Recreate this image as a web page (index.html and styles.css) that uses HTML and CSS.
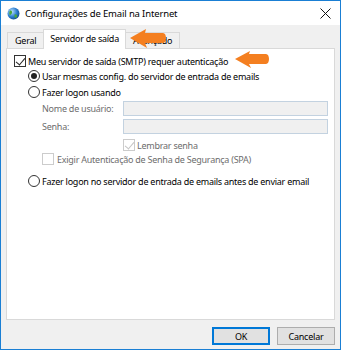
FILE: index.html
```html
<!DOCTYPE html>
<html lang="pt">
<head>
  <meta charset="UTF-8" />
  <title>Configurações de Email na Internet</title>
  <link rel="stylesheet" href="styles.css">
</head>
<body>
  <div class="window">
    <div class="titlebar">
      <svg class="app-icon" width="13" height="13" viewBox="0 0 13 13">
        <defs>
          <radialGradient id="g" cx="35%" cy="35%" r="70%">
            <stop offset="0" stop-color="#bfe3ff" />
            <stop offset="0.6" stop-color="#2d7fd0" />
            <stop offset="1" stop-color="#14508f" />
          </radialGradient>
        </defs>
        <circle cx="6.5" cy="6.5" r="6" fill="url(#g)" />
        <path d="M3 3.5 C4.5 3 5.5 4.5 5 6 C4.5 7.5 3.5 7 3 8.5 C2 7 2 5 3 3.5 Z" fill="#4aa83a" />
        <path d="M7.5 7.5 C9 7 10.5 8 10 10 C9 11 8 11 7.5 10 Z" fill="#4aa83a" />
      </svg>
      <span class="title">Configurações de Email na Internet</span>
      <svg class="close" width="11" height="11" viewBox="0 0 11 11">
        <path d="M0.5 0.5 L10.5 10.5 M10.5 0.5 L0.5 10.5" stroke="#111" stroke-width="1" />
      </svg>
    </div>

    <div class="body">
      <div class="tabs">
        <div class="tab">Geral</div>
        <div class="tab active">Servidor de saída</div>
        <div class="tab">Avançado</div>
      </div>

      <div class="panel">
        <div class="row row-main">
          <span class="check checked"></span>
          <span>Meu servidor de saída (SMTP) requer autenticação</span>
        </div>
        <div class="row row-radio1 indent">
          <span class="radio selected"></span>
          <span>Usar mesmas config. do servidor de entrada de emails</span>
        </div>
        <div class="row row-radio2 indent">
          <span class="radio"></span>
          <span>Fazer logon usando</span>
        </div>
        <div class="field field-user">
          <span class="field-label">Nome de usuário:</span>
          <span class="input"></span>
        </div>
        <div class="field field-pass">
          <span class="field-label">Senha:</span>
          <span class="input"></span>
        </div>
        <div class="row row-remember">
          <span class="check checked disabled"></span>
          <span class="muted">Lembrar senha</span>
        </div>
        <div class="row row-spa">
          <span class="check disabled"></span>
          <span class="muted">Exigir Autenticação de Senha de Segurança (SPA)</span>
        </div>
        <div class="row row-radio3 indent">
          <span class="radio"></span>
          <span>Fazer logon no servidor de entrada de emails antes de enviar email</span>
        </div>
      </div>

      <div class="buttons">
        <button class="btn default">OK</button>
        <button class="btn">Cancelar</button>
      </div>
    </div>

    <!-- callout arrows -->
    <svg class="arrow arrow-tab" width="38" height="20" viewBox="0 0 38 20">
      <path d="M0 9 L16 0 L15 4 L33 4 C37 4 37 14 33 14 L15 14 L17 19 Z" fill="#f47f20" />
    </svg>
    <svg class="arrow arrow-check" width="36" height="18" viewBox="0 0 36 18">
      <path d="M0 8 L15 0 L14 3 L31 3 C35 3 35 13 31 13 L14 13 L16 17 Z" fill="#f47f20" />
    </svg>
  </div>
</body>
</html>
```

FILE: styles.css
```css
* {
  box-sizing: border-box;
  margin: 0;
  padding: 0;
}

body {
  font-family: 'Noto Sans', sans-serif;
  font-size: 9px;
  letter-spacing: -0.25px;
  color: #000;
  background: #fff;
}

.window {
  position: relative;
  width: 341px;
  height: 350px;
  border: 1px solid #1a7fd4;
  background: #f0f0f0;
  display: flex;
  flex-direction: column;
}

.titlebar {
  height: 24px;
  background: #fff;
  display: flex;
  align-items: center;
  padding: 0 9px 0 6px;
}

.app-icon {
  flex: none;
  margin-right: 5px;
}

.title {
  flex: 1;
  font-size: 9.5px;
  letter-spacing: -0.15px;
  white-space: nowrap;
}

.close {
  flex: none;
}

.body {
  flex: 1;
  padding: 4px 5px 0 5px;
  display: flex;
  flex-direction: column;
}

.tabs {
  display: flex;
  align-items: flex-end;
  height: 19px;
  padding-left: 1px;
  position: relative;
  z-index: 1;
}

.tab {
  height: 16px;
  padding: 0 7px;
  border: 1px solid #d9d9d9;
  border-bottom: none;
  background: #f0f0f0;
  line-height: 16px;
  white-space: nowrap;
}

.tab.active {
  background: #fff;
  margin-bottom: -1px;
  height: 20px;
  line-height: 17px;
  padding: 0 6px;
}

.tab + .tab {
  margin-left: -1px;
}

.panel {
  height: 272px;
  width: 329px;
  background: #fff;
  border: 1px solid #d9d9d9;
  padding: 5px 0 0 7px;
}

.row {
  display: flex;
  align-items: center;
  height: 14px;
  white-space: nowrap;
}

.row .check,
.row .radio {
  margin-right: 2px;
}

.indent {
  padding-left: 14px;
}

.row-radio1 { margin-top: 1px; }
.row-radio2 { margin-top: 2px; }
.row-remember { margin-top: 4px; padding-left: 109px; }
.row-spa { margin-top: 0; padding-left: 28px; }
.row-spa .check { margin-right: 3px; }
.row-radio3 { margin-top: 8px; }

.check {
  flex: none;
  width: 12px;
  height: 12px;
  border: 1px solid #333;
  background: #fff;
  position: relative;
}

.check.checked::after {
  content: "";
  position: absolute;
  left: 3px;
  top: 0px;
  width: 4px;
  height: 8px;
  border-right: 1.2px solid #222;
  border-bottom: 1.2px solid #222;
  transform: rotate(40deg);
}

.check.disabled {
  border-color: #cccccc;
}

.check.disabled::after {
  border-color: #c4c4c4;
}

.radio {
  flex: none;
  width: 12px;
  height: 12px;
  border: 1px solid #333;
  border-radius: 50%;
  background: #fff;
  position: relative;
}

.radio.selected::after {
  content: "";
  position: absolute;
  left: 2px;
  top: 2px;
  width: 6px;
  height: 6px;
  border-radius: 50%;
  background: #222;
}

.muted,
.field-label {
  color: #6d6d6d;
}

.field {
  display: flex;
  align-items: center;
  padding-left: 28px;
  height: 15px;
}

.field-user { margin-top: 2px; }
.field-pass { margin-top: 3px; }

.field-label {
  width: 81px;
  white-space: nowrap;
}

.input {
  width: 205px;
  height: 15px;
  border: 1px solid #c3d2e0;
  background: #f0f0f0;
}

.buttons {
  display: flex;
  justify-content: flex-end;
  gap: 7px;
  padding: 7px 0 0 0;
}

.btn {
  width: 58px;
  height: 18px;
  font-family: 'Noto Sans', sans-serif;
  font-size: 9px;
  letter-spacing: -0.2px;
  background: #e1e1e1;
  border: 1px solid #adadad;
  color: #000;
}

.btn.default {
  border: 2px solid #0078d7;
}

.arrow {
  position: absolute;
  z-index: 2;
}

.arrow-tab {
  left: 129px;
  top: 28px;
}

.arrow-check {
  left: 234px;
  top: 50px;
}
```
